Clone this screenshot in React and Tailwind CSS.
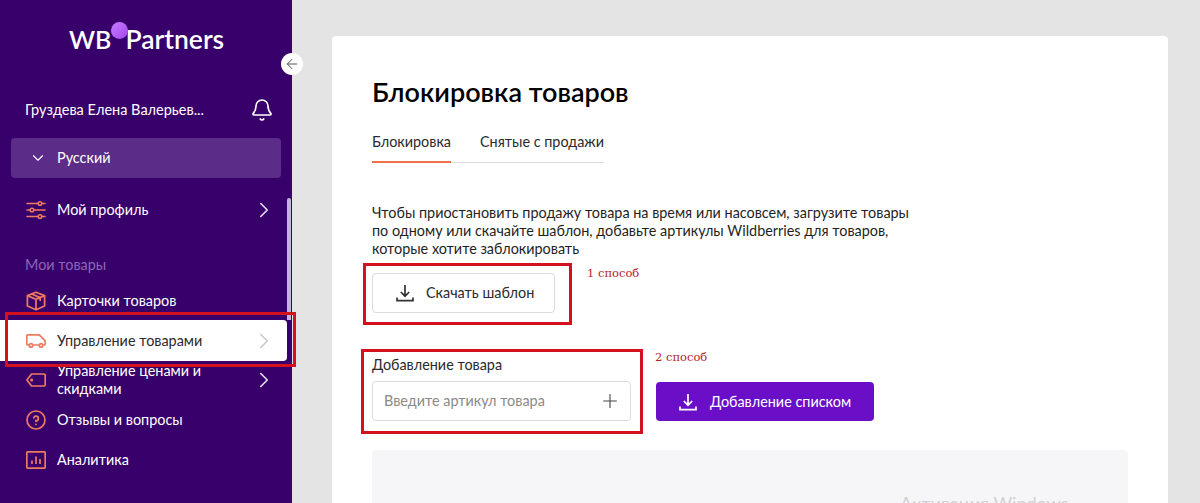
import React from 'react';
import { ArrowLeft, Bell, ChevronDown, ChevronRight, Plus } from 'lucide-react';

const ORANGE = '#ee7b60';

// Иконки меню
const SlidersIcon = () => (
  <svg width="20" height="20" viewBox="0 0 20 20" fill="none" stroke={ORANGE} strokeWidth="1.500" strokeLinecap="round">
    <path d="M1 3.500h11M16 3.500h3M1 10h3M8 10h11M1 16.500h11M16 16.500h3" />
    <circle cx="14" cy="3.500" r="1.800" />
    <circle cx="6" cy="10" r="1.800" />
    <circle cx="14" cy="16.500" r="1.800" />
  </svg>
);

const BoxIcon = () => (
  <svg width="20" height="20" viewBox="0 0 20 20" fill="none" stroke={ORANGE} strokeWidth="1.700" strokeLinejoin="round">
    <path d="M10 1.200 18.600 4.600V15L10 18.800 1.400 15V4.600Z" />
    <path d="M1.400 4.600 10 8.200 18.600 4.600M10 8.200V18.800M5.600 3l8.600 3.600V10" />
  </svg>
);

const TruckIcon = () => (
  <svg width="20" height="14" viewBox="0 0 20 14" fill="none" stroke={ORANGE} strokeWidth="1.700" strokeLinejoin="round">
    <path d="M3.200 11H2a1.200 1.200 0 0 1-1.200-1.200V2A1.200 1.200 0 0 1 2 .8h10.500c.5 0 .9.2 1.200.6l4.800 4.800c.4.4.7.9.7 1.400v2.200a1.200 1.200 0 0 1-1.200 1.200h-.8M6.600 11h6.800" />
    <circle cx="5" cy="11.400" r="1.700" />
    <circle cx="15.100" cy="11.400" r="1.700" />
  </svg>
);

const TagIcon = () => (
  <svg width="20" height="14" viewBox="0 0 20 14" fill="none" stroke={ORANGE} strokeWidth="1.700" strokeLinejoin="round">
    <path d="M5.600 1H17.800A1.400 1.400 0 0 1 19.200 2.400V11.600A1.400 1.400 0 0 1 17.800 13H5.600L.9 7Z" />
    <circle cx="5.600" cy="7" r=".7" />
  </svg>
);

const QuestionIcon = () => (
  <svg width="20" height="20" viewBox="0 0 20 20" fill="none" stroke={ORANGE} strokeWidth="1.700" strokeLinecap="round">
    <circle cx="10" cy="10" r="9" />
    <path d="M7.800 7.900A2.300 2.300 0 1 1 10 10.700v.8" />
    <path d="M10 14.300v.1" />
  </svg>
);

const ChartIcon = () => (
  <svg width="20" height="18" viewBox="0 0 20 18" fill="none" stroke={ORANGE} strokeWidth="1.700">
    <rect x=".8" y=".8" width="18.400" height="16.400" rx="1.200" />
    <path d="M6 13V9.500M10 13V5.500M14 13V8" />
  </svg>
);

const DownloadIcon = ({ color }) => (
  <svg width="18" height="18" viewBox="0 0 18 18" fill="none" stroke={color} strokeWidth="1.700">
    <path d="M9 1v11M4.800 8 9 12.200 13.200 8" />
    <path d="M1 13.500V16.700H17V13.500" />
  </svg>
);

const MenuItem = ({ icon, label, arrow, active, className = '' }) => (
  <div
    className={`flex items-center pl-[26px] ${
      active ? 'bg-white rounded-r-[4px] text-[#2b2b2b] w-[287px] pr-[10px]' : 'text-white w-[281px] pr-[4px]'
    } ${className}`}
  >
    <span className="w-[31px] flex justify-start shrink-0">{icon}</span>
    <span className="flex-1 pr-[16px] text-[14.400px] leading-[18px]">{label}</span>
    {arrow && (
      <ChevronRight
        size={26}
        strokeWidth={1.500}
        className={`shrink-0 ${active ? 'text-[#c9c9c9]' : 'text-[#e6e0f0]'}`}
      />
    )}
  </div>
);

const Sidebar = () => (
  <aside className="relative w-[292px] h-[503px] shrink-0 bg-[#38006b] flex flex-col">
    {/* Логотип */}
    <div className="relative h-[78px] flex items-start pt-[22px] pl-[69px]">
      <span className="text-white text-[25px] leading-[34px] font-semibold whitespace-nowrap">
        WB<span className="ml-[14px] text-[26.500px]">Partners</span>
      </span>
      <span className="absolute left-[111px] top-[22px] w-[17px] h-[17px] rounded-full bg-gradient-to-br from-[#c77dff] to-[#a445ee]" />
    </div>

    <div className="h-[60px] flex items-center justify-between pl-[25px] pr-[18px] pt-[4px]">
      <span className="text-white text-[14.500px]">Груздева Елена Валерьев...</span>
      <Bell size={24} strokeWidth={1.700} className="text-white" />
    </div>

    <div className="ml-[11px] w-[270px] h-[40px] bg-[#5b2d88] rounded-[4px] flex items-center pl-[18px] text-white">
      <ChevronDown size={18} strokeWidth={1.500} className="mr-[10px]" />
      <span className="text-[14.400px]">Русский</span>
    </div>

    <MenuItem icon={<SlidersIcon />} label="Мой профиль" arrow className="h-[24px] mt-[20px]" />

    <div className="mt-[33px] pl-[25px] text-[#8b66b8] text-[14.400px] leading-[20px]">Мои товары</div>

    <MenuItem icon={<BoxIcon />} label="Карточки товаров" className="h-[22px] mt-[15px]" />
    <MenuItem icon={<TruckIcon />} label="Управление товарами" arrow active className="h-[41px] mt-[8px]" />
    <MenuItem icon={<TagIcon />} label="Управление ценами и скидками" arrow className="h-[36px] mt-[1px]" />
    <MenuItem icon={<QuestionIcon />} label="Отзывы и вопросы" className="h-[20px] mt-[12px]" />
    <MenuItem icon={<ChartIcon />} label="Аналитика" className="h-[20px] mt-[20px]" />

    {/* Скроллбар */}
    <div className="absolute left-[287px] top-[198px] w-[4px] h-[122px] bg-[#c5b3dc] rounded-t-full" />

    {/* Кнопка сворачивания */}
    <button className="absolute left-[281px] top-[53px] w-[22px] h-[22px] rounded-full bg-white flex items-center justify-center text-[#555]">
      <ArrowLeft size={16} strokeWidth={1.500} />
    </button>
  </aside>
);

const Main = () => (
  <main className="flex-1 h-[503px] overflow-hidden pt-[36px] pl-[40px] pr-[32px]">
    <div className="relative h-[467px] bg-white rounded-t-[4px] pt-[38px] px-[40px]">
      <h1 className="text-[27px] leading-[36px] font-semibold text-black">Блокировка товаров</h1>

      {/* Вкладки */}
      <div className="mt-[16px] flex w-[232px] h-[37px] border-b border-[#dcdcdc] text-[14.400px] text-[#2b2b2b]">
        <div className="w-[79px] h-[37px] border-b-2 border-[#f0704a] leading-[22px] pt-[5px]">Блокировка</div>
        <div className="ml-[29px] leading-[22px] pt-[5px] whitespace-nowrap">Снятые с продажи</div>
      </div>

      <p className="mt-[41px] w-[545px] text-[14.400px] leading-[18px] text-[#1f1f1f]">
        Чтобы приостановить продажу товара на время или насовсем, загрузите товары по одному или скачайте шаблон, добавьте артикулы Wildberries для товаров, которые хотите заблокировать
      </p>

      <button className="mt-[15px] w-[183px] h-[40px] border border-[#dcdcdc] rounded-[4px] bg-white flex items-center pl-[23px] text-[#2b2b2b] text-[14.400px]">
        <DownloadIcon color="#333333" />
        <span className="ml-[12px]">Скачать шаблон</span>
      </button>

      <div className="mt-[42px] flex items-end gap-[25px]">
        <div>
          <div className="text-[14.400px] leading-[20px] text-[#2b2b2b]">Добавление товара</div>
          <div className="mt-[6px] w-[259px] h-[40px] border border-[#dcdcdc] rounded-[4px] flex items-center justify-between pl-[11px] pr-[9px]">
            <span className="text-[14.400px] text-[#8a8a8a]">Введите артикул товара</span>
            <Plus size={22} strokeWidth={1.200} className="text-[#444]" />
          </div>
        </div>
        <button className="w-[218px] h-[39px] bg-[#6a0fc7] rounded-[4px] flex items-center pl-[23px] text-white text-[14.400px]">
          <DownloadIcon color="#ffffff" />
          <span className="ml-[13px]">Добавление списком</span>
        </button>
      </div>

      <div className="mt-[29px] w-[756px] h-[60px] bg-[#f6f6f9] rounded-t-[4px]" />

      {/* Красные пометки поверх скриншота */}
      <div className="absolute left-[31px] top-[227px] w-[209px] h-[62px] border-[3px] border-[#d4111e]" />
      <div className="absolute left-[29px] top-[313px] w-[282px] h-[85px] border-[3px] border-[#d4111e]" />
      <span className="absolute left-[255px] top-[230px] text-[11.500px] leading-[14px] text-[#b5232d] font-['DejaVu_Serif',serif]">1 способ</span>
      <span className="absolute left-[323px] top-[314px] text-[11.500px] leading-[14px] text-[#b5232d] font-['DejaVu_Serif',serif]">2 способ</span>
      <span className="absolute left-[568px] top-[455px] text-[18px] leading-[24px] whitespace-nowrap text-[#d0d0d4]">Активация Windows</span>
    </div>
  </main>
);

export default function App() {
  return (
    <div className="relative w-[1200px] h-[503px] overflow-hidden bg-[#e4e4e4] flex font-['Lato','Noto_Sans',sans-serif]">
      <Sidebar />
      <Main />
      {/* Рамка вокруг активного пункта */}
      <div className="absolute left-[5px] top-[312px] w-[291px] h-[55px] border-[3px] border-[#d4111e]" />
    </div>
  );
}
